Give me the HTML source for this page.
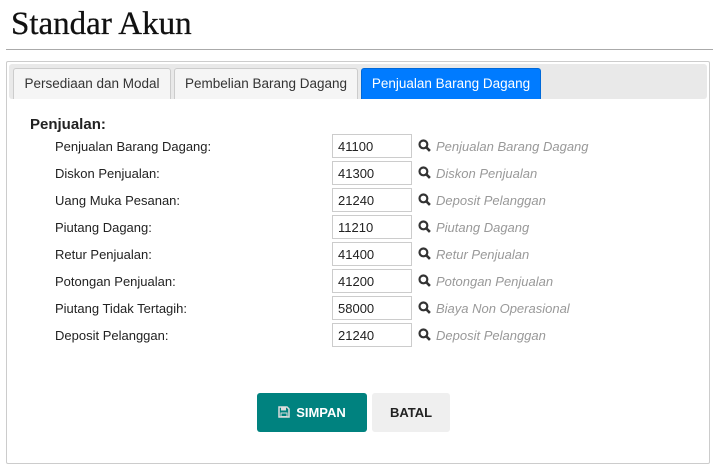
<!DOCTYPE html>
<html><head><style>
body{margin:0;width:713px;height:471px;background:#fff;font-family:"Liberation Sans",sans-serif;position:relative;overflow:hidden}
.t{position:absolute;left:11px;top:6px;font-family:"Liberation Serif",serif;font-size:33px;color:#111;-webkit-text-stroke:0.3px #111}
.hr{position:absolute;left:6px;right:0;top:49px;height:1px;background:#aaa}
.panel{position:absolute;left:6px;top:61px;width:704px;height:403px;border:1px solid #ccc;box-sizing:border-box;border-radius:2px}
.bar{position:absolute;left:9px;top:64px;width:698px;height:35px;background:#e9e9e9;border-radius:3px}
.tab{position:absolute;top:68px;height:31px;box-sizing:border-box;border:1px solid #ccc;border-bottom:none;background:#f5f5f5;border-radius:3px 3px 0 0;font-size:13.5px;color:#333;line-height:30px;text-align:center}
.tab.a{background:#007bff;border-color:#0069d9;color:#fff}
.h{position:absolute;left:30px;top:116px;font-weight:bold;font-size:15px;color:#222}
.r{position:absolute;left:0;height:24px;width:713px}
.l{position:absolute;left:55px;top:5px;font-size:13px;color:#222}
.i{position:absolute;left:332px;top:0;width:80px;height:24px;box-sizing:border-box;border:1px solid #ccc;font-size:13px;color:#222;padding:4px 0 0 5px}
.s{position:absolute;left:418px;top:5px}
.d{position:absolute;left:436px;top:5px;font-size:13px;color:#999;font-style:italic}
.b{position:absolute;top:393px;height:39px;border-radius:3px;font-weight:bold;font-size:13px;line-height:39px;text-align:center}
</style></head><body>
<div class="t">Standar Akun</div>
<div class="hr"></div>
<div class="panel"></div>
<div class="bar"></div>
<div class="tab" style="left:13px;width:158px">Persediaan dan Modal</div>
<div class="tab" style="left:174px;width:184px">Pembelian Barang Dagang</div>
<div class="tab a" style="left:361px;width:180px">Penjualan Barang Dagang</div>
<div class="h">Penjualan:</div>
<div class="r" style="top:134px"><span class="l">Penjualan Barang Dagang:</span><span class="i">41100</span><svg class="s" width="13" height="13" viewBox="0 0 12 12"><circle cx="5" cy="5" r="3.6" fill="none" stroke="#333" stroke-width="2"/><path d="M7.5 7.5L11 11" stroke="#333" stroke-width="2.4"/></svg><span class="d">Penjualan Barang Dagang</span></div>
<div class="r" style="top:161px"><span class="l">Diskon Penjualan:</span><span class="i">41300</span><svg class="s" width="13" height="13" viewBox="0 0 12 12"><circle cx="5" cy="5" r="3.6" fill="none" stroke="#333" stroke-width="2"/><path d="M7.5 7.5L11 11" stroke="#333" stroke-width="2.4"/></svg><span class="d">Diskon Penjualan</span></div>
<div class="r" style="top:188px"><span class="l">Uang Muka Pesanan:</span><span class="i">21240</span><svg class="s" width="13" height="13" viewBox="0 0 12 12"><circle cx="5" cy="5" r="3.6" fill="none" stroke="#333" stroke-width="2"/><path d="M7.5 7.5L11 11" stroke="#333" stroke-width="2.4"/></svg><span class="d">Deposit Pelanggan</span></div>
<div class="r" style="top:215px"><span class="l">Piutang Dagang:</span><span class="i">11210</span><svg class="s" width="13" height="13" viewBox="0 0 12 12"><circle cx="5" cy="5" r="3.6" fill="none" stroke="#333" stroke-width="2"/><path d="M7.5 7.5L11 11" stroke="#333" stroke-width="2.4"/></svg><span class="d">Piutang Dagang</span></div>
<div class="r" style="top:242px"><span class="l">Retur Penjualan:</span><span class="i">41400</span><svg class="s" width="13" height="13" viewBox="0 0 12 12"><circle cx="5" cy="5" r="3.6" fill="none" stroke="#333" stroke-width="2"/><path d="M7.5 7.5L11 11" stroke="#333" stroke-width="2.4"/></svg><span class="d">Retur Penjualan</span></div>
<div class="r" style="top:269px"><span class="l">Potongan Penjualan:</span><span class="i">41200</span><svg class="s" width="13" height="13" viewBox="0 0 12 12"><circle cx="5" cy="5" r="3.6" fill="none" stroke="#333" stroke-width="2"/><path d="M7.5 7.5L11 11" stroke="#333" stroke-width="2.4"/></svg><span class="d">Potongan Penjualan</span></div>
<div class="r" style="top:296px"><span class="l">Piutang Tidak Tertagih:</span><span class="i">58000</span><svg class="s" width="13" height="13" viewBox="0 0 12 12"><circle cx="5" cy="5" r="3.6" fill="none" stroke="#333" stroke-width="2"/><path d="M7.5 7.5L11 11" stroke="#333" stroke-width="2.4"/></svg><span class="d">Biaya Non Operasional</span></div>
<div class="r" style="top:323px"><span class="l">Deposit Pelanggan:</span><span class="i">21240</span><svg class="s" width="13" height="13" viewBox="0 0 12 12"><circle cx="5" cy="5" r="3.6" fill="none" stroke="#333" stroke-width="2"/><path d="M7.5 7.5L11 11" stroke="#333" stroke-width="2.4"/></svg><span class="d">Deposit Pelanggan</span></div>
<div class="b" style="left:257px;width:110px;background:#00827f;color:#fff"><svg width="12" height="12" viewBox="0 0 12 12" style="vertical-align:-1px;margin-right:6px"><path d="M1 1h8l2 2v8H1z" fill="none" stroke="#ddd" stroke-width="1.5"/><rect x="3" y="1.5" width="5" height="3" fill="#ddd"/><rect x="3" y="7" width="6" height="3.5" fill="none" stroke="#ddd" stroke-width="1"/></svg>SIMPAN</div>
<div class="b" style="left:372px;width:78px;background:#efefef;color:#222">BATAL</div>
</body></html>
